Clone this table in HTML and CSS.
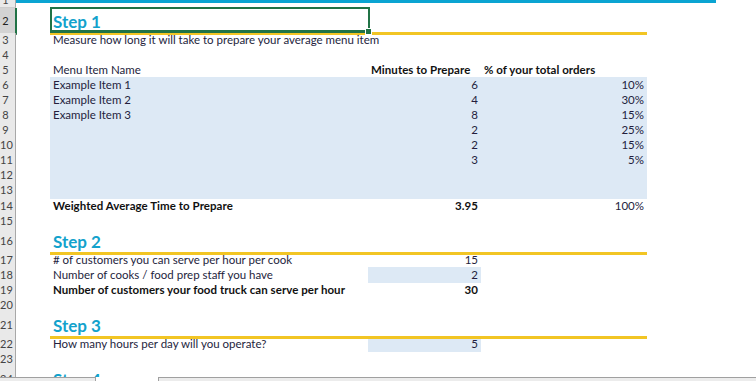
FILE: index.html
```html
<!DOCTYPE html>
<html lang="en">
<head>
    <meta charset="UTF-8">
    <meta name="viewport" content="width=device-width, initial-scale=1.0">
    <title>Food Truck Capacity Planner</title>
    <link rel="stylesheet" href="styles.css">
</head>
<body>
    <div class="grid">
        <div class="row top"><div class="hd">1</div><div class="band"></div></div>

        <div class="row step first sel">
            <div class="hd">2</div><div></div>
            <div class="heading"><span class="title">Step 1</span><div class="cursor"><span class="handle"></span></div></div>
        </div>
        <div class="row short"><div class="hd">3</div><div></div><div class="txt">Measure how long it will take to prepare your average menu item</div></div>
        <div class="row"><div class="hd">4</div></div>
        <div class="row">
            <div class="hd">5</div><div></div>
            <div class="txt">Menu Item Name</div>
            <div class="txt strong">Minutes to Prepare</div>
            <div class="txt strong">% of your total orders</div>
        </div>
        <div class="row"><div class="hd">6</div><div></div><div class="txt fill">Example Item 1</div><div class="num fill">6</div><div class="num fill">10%</div></div>
        <div class="row"><div class="hd">7</div><div></div><div class="txt fill">Example Item 2</div><div class="num fill">4</div><div class="num fill">30%</div></div>
        <div class="row"><div class="hd">8</div><div></div><div class="txt fill">Example Item 3</div><div class="num fill">8</div><div class="num fill">15%</div></div>
        <div class="row"><div class="hd">9</div><div></div><div class="txt fill"></div><div class="num fill">2</div><div class="num fill">25%</div></div>
        <div class="row"><div class="hd">10</div><div></div><div class="txt fill"></div><div class="num fill">2</div><div class="num fill">15%</div></div>
        <div class="row"><div class="hd">11</div><div></div><div class="txt fill"></div><div class="num fill">3</div><div class="num fill">5%</div></div>
        <div class="row"><div class="hd">12</div><div></div><div class="txt fill"></div><div class="num fill"></div><div class="num fill"></div></div>
        <div class="row tall1"><div class="hd">13</div><div></div><div class="txt fill"></div><div class="num fill"></div><div class="num fill"></div></div>
        <div class="row">
            <div class="hd">14</div><div></div>
            <div class="txt strong">Weighted Average Time to Prepare</div>
            <div class="num strong">3.95</div>
            <div class="num">100%</div>
        </div>
        <div class="row"><div class="hd">15</div></div>

        <div class="row step"><div class="hd">16</div><div></div><div class="heading"><span class="title">Step 2</span></div></div>
        <div class="row"><div class="hd">17</div><div></div><div class="txt"># of customers you can serve per hour per cook</div><div class="num">15</div></div>
        <div class="row"><div class="hd">18</div><div></div><div class="txt">Number of cooks / food prep staff you have</div><div class="num fill">2</div></div>
        <div class="row"><div class="hd">19</div><div></div><div class="txt strong">Number of customers your food truck can serve per hour</div><div class="num strong">30</div></div>
        <div class="row"><div class="hd">20</div></div>

        <div class="row step"><div class="hd">21</div><div></div><div class="heading"><span class="title">Step 3</span></div></div>
        <div class="row"><div class="hd">22</div><div></div><div class="txt">How many hours per day will you operate?</div><div class="num fill">5</div></div>
        <div class="row"><div class="hd">23</div></div>

        <div class="row step"><div class="hd">24</div><div></div><div class="heading"><span class="title">Step 4</span></div></div>
    </div>

    <div class="statusbar">
        <div class="nav"></div>
        <div class="gap"></div>
        <div class="scroll"></div>
    </div>
</body>
</html>
```

FILE: styles.css
```css
body {
    margin: 0;
    font-family: Lato, "Liberation Sans", sans-serif;
    font-size: 11.5px;
    color: #241e3d;
    background: #fff;
    overflow: hidden;
}
.grid {
    height: 377px;
    overflow: hidden;
}
.row {
    display: grid;
    grid-template-columns: 16px 34px 318px 113px 166px 1fr;
    height: 15px;
    line-height: 15px;
}
.row.short {
    height: 14px;
    line-height: 14px;
}
.row.tall1 {
    height: 16px;
    line-height: 16px;
}
.row.top {
    height: 8px;
}
.row.step {
    height: 24px;
}
.row.step.first {
    height: 25px;
}

/* row numbers down the left edge */
.hd {
    box-sizing: border-box;
    background: #e9e9e9;
    border-right: 1px solid #a8a8a8;
    border-bottom: 1px solid #cdcdcd;
    color: #444;
    font-size: 11px;
    text-align: center;
    padding-right: 4px;
}
.row.step .hd {
    line-height: 26px;
}
.row.top .hd {
    line-height: 0;
}
.row.sel .hd {
    background: #d3d3d3;
    border-right: 2px solid #217346;
    margin-right: -1px;
    color: #222;
}

.band {
    grid-column: 2 / -1;
    width: 700px;
    height: 3px;
    background: #0aa4d2;
}

.txt {
    padding-left: 3px;
    white-space: nowrap;
}
.num {
    padding-right: 3px;
    text-align: right;
    white-space: nowrap;
}
.strong {
    font-weight: bold;
    letter-spacing: 0.05px;
    color: #111;
}
.fill {
    background: #dde9f5;
}

.heading {
    grid-column: 3 / 6;
    position: relative;
    display: flex;
    align-items: flex-end;
    border-bottom: 3px solid #f2c524;
    padding-left: 3px;
}
.title {
    font-size: 17px;
    font-weight: bold;
    line-height: 20px;
    color: #12a2cc;
}

/* active cell outline */
.cursor {
    position: absolute;
    left: 0;
    top: -1px;
    width: 320px;
    height: 26px;
    box-sizing: border-box;
    border: 2px solid #217346;
    border-bottom-width: 3px;
}
.handle {
    position: absolute;
    right: -3px;
    bottom: -4px;
    width: 5px;
    height: 5px;
    background: #217346;
    box-shadow: 0 0 0 1px #fff;
}

.statusbar {
    display: flex;
    height: 4px;
}
.nav {
    width: 95px;
    background: #ececec;
    border-top: 1px solid #a0a0a0;
    border-right: 1px solid #a0a0a0;
}
.gap {
    width: 62px;
    background: #fff;
}
.scroll {
    flex: 1;
    background: #ececec;
    border-top: 1px solid #a0a0a0;
    border-left: 1px solid #a0a0a0;
}
```
